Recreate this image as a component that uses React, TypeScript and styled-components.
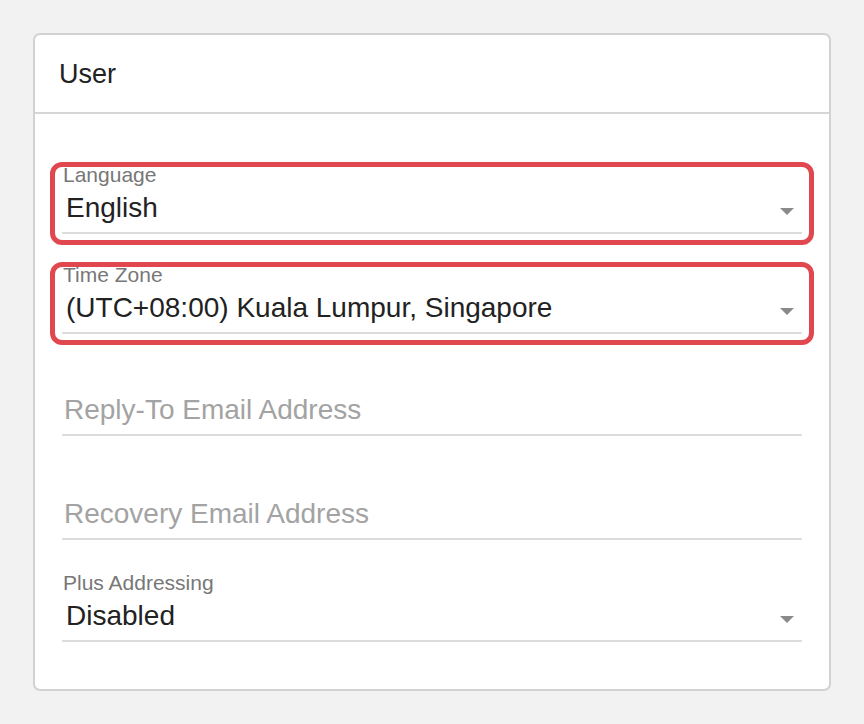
import styled, { createGlobalStyle } from 'styled-components'

const GlobalStyle = createGlobalStyle`
  html, body {
    margin: 0;
    padding: 0;
    background: #f2f2f2;
    font-family: "Liberation Sans", Arial, sans-serif;
  }
`

type FieldDef = {
  label: string
  value?: string
  select?: boolean
  highlight?: boolean
  space: number
}

const fields: FieldDef[] = [
  { label: 'Language', value: 'English', select: true, highlight: true, space: 0 },
  { label: 'Time Zone', value: '(UTC+08:00) Kuala Lumpur, Singapore', select: true, highlight: true, space: 31 },
  { label: 'Reply-To Email Address', space: 33 },
  { label: 'Recovery Email Address', space: 35 },
  { label: 'Plus Addressing', value: 'Disabled', select: true, space: 33 },
]

export default function App() {
  return (
    <>
      <GlobalStyle />
      <Page>
        <Card>
          <CardHeader>User</CardHeader>
          <CardBody>
            {fields.map((f) => (
              <Field key={f.label} $highlight={f.highlight} $space={f.space}>
                <Label>{f.value ? f.label : '\u00a0'}</Label>
                <Control>
                  {f.value ? <Value>{f.value}</Value> : <Placeholder>{f.label}</Placeholder>}
                  {f.select && <Caret />}
                </Control>
              </Field>
            ))}
          </CardBody>
        </Card>
      </Page>
    </>
  )
}

const Page = styled.div`
  padding: 33px 33px 32px 33px;
`

const Card = styled.div`
  background: #fff;
  border: 2px solid #d2d2d2;
  border-radius: 7px;
`

const CardHeader = styled.div`
  height: 79px;
  display: flex;
  align-items: center;
  padding: 2px 0 0 24px;
  box-sizing: border-box;
  font-size: 27px;
  color: #222;
  border-bottom: 2px solid #d6d6d6;
`

const CardBody = styled.div`
  padding: 51px 27px 47px 27px;
  display: flex;
  flex-direction: column;
`

const Field = styled.div<{ $highlight?: boolean; $space: number }>`
  position: relative;
  margin-top: ${(p) => p.$space}px;
  padding: 0 0 8px;
  border-bottom: 2px solid #dcdcdc;

  &::before {
    content: '';
    display: ${(p) => (p.$highlight ? 'block' : 'none')};
    position: absolute;
    left: -12px;
    right: -12px;
    top: -3px;
    bottom: -13px;
    border: 5px solid #e0474e;
    border-radius: 12px;
    pointer-events: none;
  }
`

const Label = styled.div`
  font-size: 21px;
  line-height: 20px;
  height: 20px;
  color: #777;
  padding-left: 1px;
  margin-bottom: 7px;
  white-space: nowrap;
`

const Control = styled.div`
  display: flex;
  align-items: center;
  height: 32px;
  padding-left: 4px;
`

const Value = styled.div`
  flex: 1;
  font-size: 28px;
  line-height: 32px;
  color: #222;
  white-space: nowrap;
`

const Placeholder = styled(Value)`
  margin-left: -2px;
  color: #a3a3a3;
`

const Caret = styled.div`
  width: 0;
  height: 0;
  margin: 6px 8px 0 0;
  border-left: 7px solid transparent;
  border-right: 7px solid transparent;
  border-top: 7px solid #8a8a8a;
`
